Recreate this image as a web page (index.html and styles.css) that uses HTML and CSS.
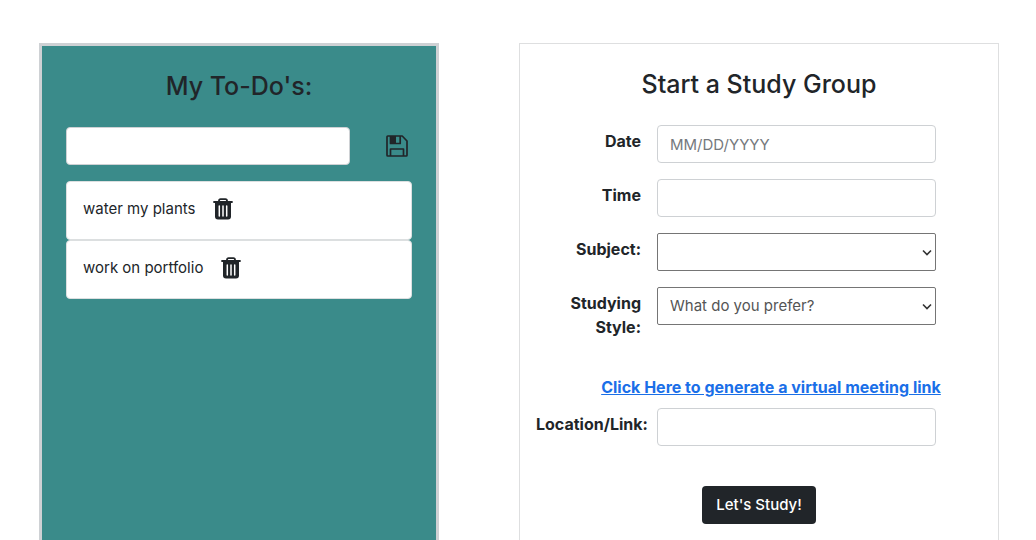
FILE: index.html
```html
<!DOCTYPE html>
<html lang="en">
<head>
<meta charset="utf-8">
<title>Study Group</title>
<link rel="stylesheet" href="styles.css">
</head>
<body>
<main class="page">
  <section class="panel todo">
    <h1 class="title">My To-Do's:</h1>
    <form class="todo-form">
      <input class="field todo-input" type="text" aria-label="New to-do">
      <button class="icon-button" type="button" aria-label="Save">
        <svg width="22" height="22" viewBox="0 0 22 22" fill="none" stroke="currentColor" stroke-width="1.7" stroke-linejoin="round"><path d="M1.8 1H16.200L21 6V20.200Q21 21 20.200 21H1.800Q1 21 1 20.200V1.800Q1 1 1.800 1Z"/><path d="M4.500 1V8.500H14.200V1M4.500 21V14H17.500V21"/><path d="M4.500 1H10V8.500H4.500Z" fill="currentColor" stroke="none"/></svg>
      </button>
    </form>
    <ul class="list">
      <li class="item">water my plants
        <button class="icon-button" type="button" aria-label="Delete water my plants">
          <svg width="20" height="22" viewBox="0 0 20 22"><path d="M1 4H19M6 4V2.800Q6 1.200 7.600 1.200H12.400Q14 1.200 14 2.800V4" fill="none" stroke="currentColor" stroke-width="1.800" stroke-linecap="round"/><path d="M2 4.500H18V18.500Q18 21.500 15 21.500H5Q2 21.500 2 18.500Z" fill="currentColor"/><path d="M6.300 8V18M10 8V18M13.700 8V18" stroke="#fff" stroke-width="1.500" stroke-linecap="round"/></svg>
        </button>
      </li>
      <li class="item">work on portfolio
        <button class="icon-button" type="button" aria-label="Delete work on portfolio">
          <svg width="20" height="22" viewBox="0 0 20 22"><path d="M1 4H19M6 4V2.800Q6 1.200 7.600 1.200H12.400Q14 1.200 14 2.800V4" fill="none" stroke="currentColor" stroke-width="1.800" stroke-linecap="round"/><path d="M2 4.500H18V18.500Q18 21.500 15 21.500H5Q2 21.500 2 18.500Z" fill="currentColor"/><path d="M6.300 8V18M10 8V18M13.700 8V18" stroke="#fff" stroke-width="1.500" stroke-linecap="round"/></svg>
        </button>
      </li>
    </ul>
  </section>

  <section class="panel study">
    <h2 class="title">Start a Study Group</h2>
    <form class="study-form">
      <div class="row">
        <label class="label" for="date">Date</label>
        <input class="field" id="date" type="text" placeholder="MM/DD/YYYY">
      </div>
      <div class="row">
        <label class="label" for="time">Time</label>
        <input class="field" id="time" type="text">
      </div>
      <div class="row">
        <label class="label" for="subject">Subject:</label>
        <div class="select">
          <select class="field select-field" id="subject"><option></option></select>
          <svg class="chevron" width="10" height="7" viewBox="0 0 10 7"><path d="M1 1.500L5 5.500L9 1.500" fill="none" stroke="currentColor" stroke-width="1.600"/></svg>
        </div>
      </div>
      <div class="row">
        <label class="label" for="style">Studying Style:</label>
        <div class="select">
          <select class="field select-field" id="style"><option>What do you prefer?</option></select>
          <svg class="chevron" width="10" height="7" viewBox="0 0 10 7"><path d="M1 1.500L5 5.500L9 1.500" fill="none" stroke="currentColor" stroke-width="1.600"/></svg>
        </div>
      </div>
      <p class="meeting"><a class="link" href="#">Click Here to generate a virtual meeting link</a></p>
      <div class="row">
        <label class="label label-long" for="location">Location/Link:</label>
        <input class="field" id="location" type="text">
      </div>
      <button class="submit" type="submit">Let's Study!</button>
    </form>
  </section>
</main>
</body>
</html>
```
FILE: styles.css
```css
* {
  box-sizing: border-box;
}

body {
  margin: 0;
  background: #fff;
  color: #212529;
  font: 400 15px/24px Inter, "Liberation Sans", sans-serif;
}

.page {
  display: grid;
  grid-template-columns: 5fr 6fr;
  gap: 80px;
  min-height: 100vh;
  padding: 43px 37px 0 39px;
}

.panel {
  min-width: 0;
}

.todo {
  padding: 24px;
  border: 3px solid #ced1d4;
  border-bottom: 0;
  background: #3a8b8a;
}

.study {
  padding: 24px 16px 16px;
  border: 1px solid #dedfe0;
  border-bottom: 0;
}

.title {
  margin: 0 0 24px;
  font-size: 25px;
  font-weight: 500;
  line-height: 33px;
  text-align: center;
}

.field {
  display: block;
  width: 100%;
  min-width: 0;
  height: 38px;
  padding: 6px 12px;
  border: 1px solid #ced1d4;
  border-radius: 4px;
  background: #fff;
  color: #212529;
  font: inherit;
}

.field::placeholder {
  color: #75797d;
  opacity: 1;
}

.icon-button {
  display: flex;
  padding: 0;
  border: 0;
  background: none;
  color: #212529;
}

.todo-form {
  display: flex;
  align-items: center;
  gap: 36px;
  padding-right: 4px;
}

.todo-input {
  flex: 1;
}

.list {
  margin: 16px 0 0;
  padding: 0;
  list-style: none;
}

.item {
  display: flex;
  align-items: center;
  gap: 18px;
  padding: 15px 16px 18px;
  border: 1px solid #dcdfe0;
  border-radius: 4px;
  background: #fff;
}

.row {
  display: grid;
  grid-template-columns: 105px 1fr;
  align-items: start;
  gap: 16px;
  margin-bottom: 16px;
  padding-right: 46px;
}

.label {
  padding-top: 4px;
  font-size: 16px;
  font-weight: 700;
  text-align: right;
}

.label-long {
  text-align: left;
  white-space: nowrap;
}

.select {
  position: relative;
}

.select-field {
  appearance: none;
  border-color: #757575;
  border-radius: 2px;
  color: #555;
}

.chevron {
  position: absolute;
  top: 16px;
  right: 4px;
  pointer-events: none;
  color: #333;
}

.meeting {
  margin: 36px 0 8px;
  padding-left: 24px;
  text-align: center;
  white-space: nowrap;
}

.link {
  color: #1a6fe8;
  font-size: 16px;
  font-weight: 700;
}

.submit {
  display: block;
  height: 38px;
  margin: 40px auto 0;
  padding: 6px 14px;
  border: 0;
  border-radius: 4px;
  background: #212529;
  color: #fff;
  font: inherit;
  font-weight: 500;
}
```
